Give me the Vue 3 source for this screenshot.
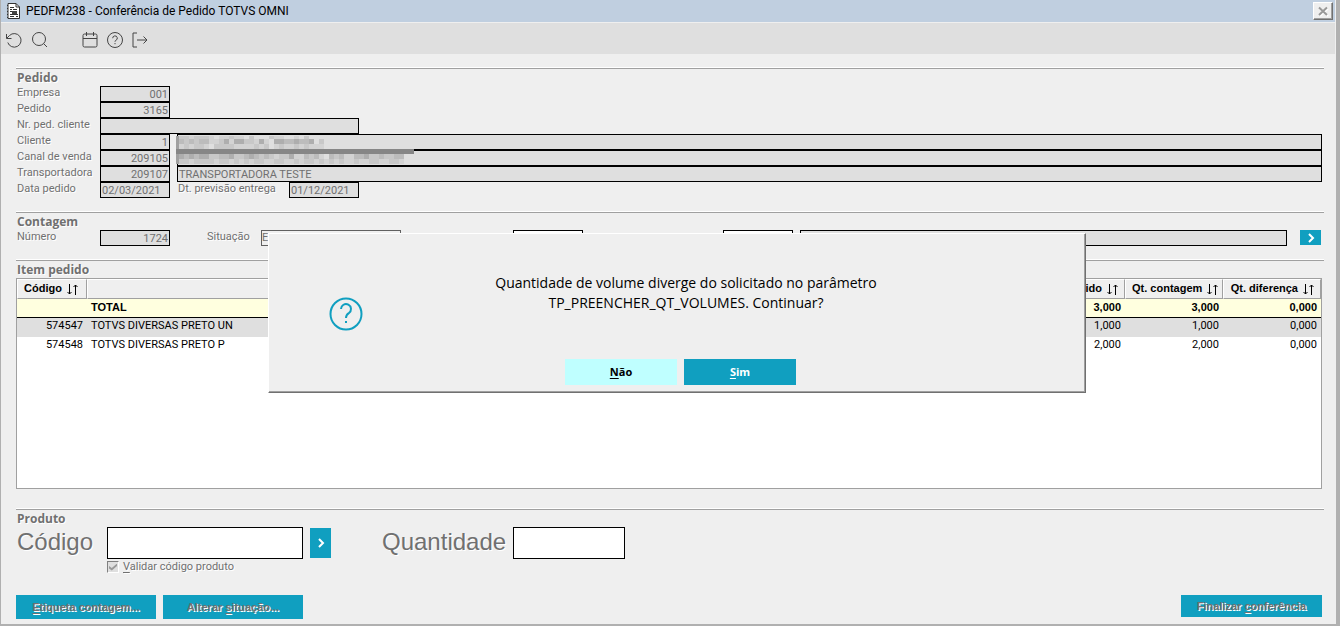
<script setup>
import { ref } from 'vue'

const codigo = ref('')
const quantidade = ref('')

const numericColumns = ['Qt. pedido', 'Qt. contagem', 'Qt. diferença']
const items = [
  { code: '574547', name: 'TOTVS DIVERSAS PRETO UN', values: ['1,000', '1,000', '0,000'], selected: true },
  { code: '574548', name: 'TOTVS DIVERSAS PRETO P', values: ['2,000', '2,000', '0,000'], selected: false }
]
const totals = ['3,000', '3,000', '0,000']

// Mosaic that hides the customer names: one digit per cell, higher is darker.
const shades = ['', '#d3d3d3', '#c8c8c8', '#bcbcbc', '#aeaeae']
const mosaicRows = [
  { y: 0, h: 3, cells: '22122210112110200021100102000' },
  { y: 3, h: 5, cells: '32323311241442214104433433402' },
  { y: 8, h: 5, cells: '12122102222111121201211212111' },
  { y: 18, h: 5, cells: '434344223342234323212241132310323113342232233' },
  { y: 23, h: 5, cells: '221222212212121221122112122121212112112211221' }
]
const mosaic = mosaicRows.flatMap((r) =>
  [...r.cells]
    .map((c, i) => ({ x: 3 + i * 5, y: r.y, h: r.h, fill: shades[+c] }))
    .filter((c) => c.fill)
)
</script>

<template>
  <div class="window">
    <header class="titlebar">
      <svg class="app-icon" width="14" height="16" viewBox="0 0 14 16" aria-hidden="true">
        <path d="M1 .5h8l3.500 3.500V15.500H1z" fill="#fff" stroke="#333" />
        <path d="M9 .5V4h3.500" fill="none" stroke="#333" />
        <path d="M3 4.500h4M3 6.500h2M6 6.500h4M3 8.500h2M3 11.500h8M3 13.500h4M9 13.500h2" stroke="#333" />
        <path d="M5 8h5v3H5z" fill="#444" />
        <path d="M0 2v1M0 5v1M0 8v1M0 11v1M0 14v1" stroke="#333" stroke-width="2" />
      </svg>
      <h1>PEDFM238 - Conferência de Pedido TOTVS OMNI</h1>
      <button class="close" type="button" aria-label="Fechar">
        <svg width="12" height="11" viewBox="0 0 12 11">
          <path d="M3 2.500l8 7.500M11 2.500l-8 7.500" stroke="#fff" stroke-width="2" />
          <path d="M2 1.500l8 7.500M10 1.500l-8 7.500" stroke="#999" stroke-width="2" />
        </svg>
      </button>
    </header>

    <nav class="toolbar">
      <button type="button" aria-label="Desfazer">
        <svg width="18" height="18" viewBox="0 0 18 18">
          <path d="M.5 3v4.500h5M.8 7.200L3.500 4.500A6.800 6.800 0 1 1 1.800 11.500" />
        </svg>
      </button>
      <button type="button" aria-label="Pesquisar">
        <svg width="18" height="18" viewBox="0 0 18 18">
          <circle cx="8" cy="8" r="6.500" /><path d="M12.700 12.700L16 16" />
        </svg>
      </button>
      <button class="spaced" type="button" aria-label="Calendário">
        <svg width="18" height="18" viewBox="0 0 18 18">
          <rect x="2" y="3" width="14" height="13" rx="1.500" /><path d="M2 7.500h14M5.500 1v4M12.500 1v4" />
        </svg>
      </button>
      <button type="button" aria-label="Ajuda">
        <svg width="18" height="18" viewBox="0 0 18 18">
          <circle cx="9" cy="9" r="7.500" />
          <path d="M6.700 7.200a2.300 2.300 0 1 1 3.200 2.100c-.6.300-.9.600-.9 1.400" /><path d="M9 12v1.200" />
        </svg>
      </button>
      <button type="button" aria-label="Sair">
        <svg width="18" height="18" viewBox="0 0 18 18">
          <path d="M6 2H2v14h4M6 9h10M12.500 5.500L16 9l-3.500 3.500" />
        </svg>
      </button>
    </nav>

    <main class="content">
      <section>
        <h2>Pedido</h2>
        <div class="fields">
          <label for="empresa">Empresa</label>
          <input id="empresa" class="num" value="001" readonly />
          <label for="pedido">Pedido</label>
          <input id="pedido" class="num" value="3165" readonly />
          <label for="nrped">Nr. ped. cliente</label>
          <input id="nrped" class="wide" value="" readonly />
          <label for="cliente">Cliente</label>
          <input id="cliente" class="num" value="1" readonly />
          <div class="name masked">
            <input aria-label="Nome do cliente" value="" readonly />
            <svg class="mosaic" width="238" height="28" viewBox="0 0 238 28" shape-rendering="crispEdges" aria-hidden="true">
              <rect width="3" height="28" fill="#a0a0a0" />
              <rect v-for="(c, i) in mosaic" :key="i" :x="c.x" :y="c.y" width="5" :height="c.h" :fill="c.fill" />
              <rect y="13" width="238" height="5" fill="#868686" />
            </svg>
          </div>
          <label for="canal">Canal de venda</label>
          <input id="canal" class="num" value="209105" readonly />
          <input class="name" aria-label="Nome do canal de venda" value="" readonly />
          <label for="transp">Transportadora</label>
          <input id="transp" class="num" value="209107" readonly />
          <input class="name" aria-label="Nome da transportadora" value="TRANSPORTADORA TESTE" readonly />
          <label for="data">Data pedido</label>
          <input id="data" value="02/03/2021" readonly />
          <div class="name delivery">
            <label for="previsao">Dt. previsão entrega</label>
            <input id="previsao" value="01/12/2021" readonly />
          </div>
        </div>
      </section>

      <section>
        <h2>Contagem</h2>
        <div class="count">
          <label class="first" for="numero">Número</label>
          <input id="numero" class="num short" value="1724" readonly />
          <label class="status" for="situacao">Situação</label>
          <select id="situacao" disabled><option>E</option></select>
          <input class="short editable volume" aria-label="Volume" />
          <input class="short editable user" aria-label="Conferente" />
          <input class="grow" aria-label="Nome do conferente" readonly />
          <button class="go" type="button" aria-label="Buscar conferente">
            <svg width="10" height="10" viewBox="0 0 10 10"><path d="M3 1l4 4-4 4" /></svg>
          </button>
        </div>
      </section>

      <section class="items">
        <h2>Item pedido</h2>
        <div class="table-box">
          <table>
            <colgroup>
              <col class="c-code" /><col /><col v-for="c in numericColumns" :key="c" class="c-num" />
            </colgroup>
            <thead>
              <tr>
                <th>Código<svg class="sort" width="11" height="11" viewBox="0 0 11 11"><path d="M2.500 0v10M.5 8l2 2 2-2M8.500 11V1M6.500 3l2-2 2 2" /></svg></th>
                <th></th>
                <th v-for="c in numericColumns" :key="c" class="right">{{ c }}<svg class="sort" width="11" height="11" viewBox="0 0 11 11"><path d="M2.500 0v10M.5 8l2 2 2-2M8.500 11V1M6.500 3l2-2 2 2" /></svg></th>
              </tr>
            </thead>
            <tbody>
              <tr class="total">
                <td></td>
                <td>TOTAL</td>
                <td v-for="(t, i) in totals" :key="i" class="right">{{ t }}</td>
              </tr>
              <tr v-for="item in items" :key="item.code" :class="{ selected: item.selected }">
                <td class="right">{{ item.code }}</td>
                <td>{{ item.name }}</td>
                <td v-for="(v, i) in item.values" :key="i" class="right">{{ v }}</td>
              </tr>
            </tbody>
          </table>
        </div>
      </section>

      <section class="product">
        <h2>Produto</h2>
        <div class="entry">
          <label class="code-label" for="codigo">Código</label>
          <input id="codigo" v-model="codigo" class="editable code" />
          <button class="go tall" type="button" aria-label="Buscar produto">
            <svg width="10" height="10" viewBox="0 0 10 10"><path d="M3 1l4 4-4 4" /></svg>
          </button>
          <label class="qty-label" for="quantidade">Quantidade</label>
          <input id="quantidade" v-model="quantidade" class="editable qty" />
        </div>
        <label class="check">
          <input type="checkbox" checked disabled />
          <span><u>V</u>alidar código produto</span>
        </label>
      </section>

      <footer class="actions">
        <button type="button" class="action" disabled><u>E</u>tiqueta contagem...</button>
        <button type="button" class="action" disabled>Alterar <u>s</u>ituação...</button>
        <button type="button" class="action finish" disabled>Finalizar <u>c</u>onferência</button>
      </footer>
    </main>

    <div class="dialog" role="dialog" aria-labelledby="dialog-text">
      <svg class="question" width="34" height="34" viewBox="0 0 34 34" aria-hidden="true">
        <circle cx="17" cy="17" r="15.500" />
        <path d="M12 12a5 5 0 1 1 7.800 4.200C18 17.300 17 18.200 17 21" />
        <path d="M17 24v2" />
      </svg>
      <p id="dialog-text">Quantidade de volume diverge do solicitado no parâmetro TP_PREENCHER_QT_VOLUMES. Continuar?</p>
      <div class="choices">
        <button type="button" class="choice no"><u>N</u>ão</button>
        <button type="button" class="choice yes"><u>S</u>im</button>
      </div>
    </div>
  </div>
</template>

<style>
body {
  margin: 0;
}
</style>

<style scoped>
* {
  box-sizing: border-box;
}

.window {
  position: relative;
  display: flex;
  flex-direction: column;
  min-height: 100vh;
  border: solid #b0b0b0;
  border-width: 0 4px 2px 1px;
  background: #efefef;
  color: #000;
  font: 11px/16px Roboto, "Liberation Sans", sans-serif;
}

button,
input,
select {
  margin: 0;
  padding: 0;
  border: 0;
  border-radius: 0;
  font: inherit;
}

u {
  text-decoration: underline;
  text-underline-offset: 2px;
}

.titlebar {
  display: flex;
  align-items: center;
  height: 22px;
  padding: 0 2px 0 6px;
  background: #c0cfe0;
  border-right: 1px solid #efefef;
}

.titlebar h1 {
  flex: 1;
  margin: 0 0 0 5px;
  font: 12px/20px Roboto, "Noto Sans", sans-serif;
}

.close {
  display: flex;
  align-items: center;
  justify-content: center;
  width: 20px;
  height: 18px;
  border: 1px solid;
  border-color: #fff #707070 #707070 #fff;
  box-shadow: inset -1px -1px #a0a0a0;
  background: #efefef;
}

.toolbar {
  display: flex;
  align-items: center;
  gap: 7px;
  height: 31px;
  margin: 1px 1px 0 0;
  padding: 3px 5px 0;
  background: #dfdfdf;
}

.toolbar button {
  width: 18px;
  height: 18px;
  background: none;
}

.toolbar svg {
  display: block;
  fill: none;
  stroke: #444;
}

.toolbar .spaced {
  margin-left: 25px;
}

.content {
  display: flex;
  flex: 1;
  flex-direction: column;
  padding: 0 12px 5px 15px;
}

section {
  margin-top: 14px;
}

h2 {
  height: 18px;
  margin: 0;
  padding-left: 1px;
  border-top: 1px solid #a0a0a0;
  box-shadow: 0 -1px #fff;
  color: #707070;
  font: bold 12px/18px "Open Sans", "Noto Sans", sans-serif;
  text-shadow: 1px 1px #fff;
}

label {
  padding-left: 1px;
  color: #707070;
  line-height: 14px;
  white-space: nowrap;
  text-shadow: 1px 1px #fff;
}

input {
  min-width: 0;
  height: 16px;
  padding: 0 1px;
  border: 1px solid #000;
  background: #dfdfdf;
  color: #707070;
  line-height: 14px;
}

.num {
  text-align: right;
}

.editable {
  background: #fff;
  color: #000;
}

.short {
  width: 70px;
}

.fields {
  display: grid;
  grid-template-columns: 84px 70px 1fr;
  grid-auto-rows: 16px;
  padding-right: 2px;
}

.fields > label {
  grid-column: 1;
}

.wide {
  grid-column: 2 / 4;
  width: 259px;
}

.name {
  margin-left: 7px;
}

.masked {
  position: relative;
  display: flex;
}

.masked input {
  flex: 1;
}

.mosaic {
  position: absolute;
  z-index: 1;
  top: 2px;
  left: -1px;
}

.delivery {
  display: flex;
}

.delivery label {
  width: 112px;
}

.delivery input {
  width: 70px;
}

.count {
  display: flex;
  padding-right: 3px;
}

.first {
  width: 84px;
}

.status {
  width: 55px;
  margin-left: 36px;
}

select {
  width: 140px;
  height: 16px;
  border: 1px solid #606060;
  background: #efefef;
  color: #707070;
  line-height: 14px;
  opacity: 1;
  appearance: none;
}

.volume {
  margin-left: 112px;
}

.user {
  margin: 0 7px 0 140px;
}

.grow {
  flex: 1;
}

.go {
  display: flex;
  align-items: center;
  justify-content: center;
  width: 21px;
  height: 15px;
  margin-left: 13px;
  background: #109fc0;
}

.go svg {
  fill: none;
  stroke: #fff;
  stroke-width: 2;
}

.items {
  display: flex;
  flex: 1;
  flex-direction: column;
}

.table-box {
  flex: 1;
  margin-right: 2px;
  border: 1px solid #a0a0a0;
  background: #fff;
}

table {
  width: 100%;
  table-layout: fixed;
  border-collapse: separate;
  border-spacing: 0;
  line-height: 16px;
}

.c-code {
  width: 70px;
}

.c-num {
  width: 98px;
}

th {
  height: 20px;
  padding: 0 6px;
  border: 1px solid;
  border-color: #fff #a0a0a0 #a0a0a0 #fff;
  background: #efefef;
  font-family: "Liberation Sans", Arial, sans-serif;
  text-align: left;
  vertical-align: top;
  white-space: nowrap;
}

td {
  height: 19px;
  padding: 0 4px;
  vertical-align: top;
  white-space: nowrap;
}

.right {
  text-align: right;
}

.sort {
  margin-left: 5px;
  vertical-align: -3px;
  fill: none;
  stroke: #000;
}

.total td {
  border-bottom: 1px solid #000;
  background: #ffffdf;
  font-family: "Liberation Sans", Arial, sans-serif;
  font-weight: bold;
}

.selected td {
  background: #dfdfdf;
}

.product {
  margin-top: 20px;
}

.entry {
  display: flex;
}

.entry label {
  font: 24px/30px "Liberation Sans", Arial, sans-serif;
}

.entry input {
  height: 32px;
}

.code-label {
  width: 91px;
}

.code {
  width: 196px;
  font-size: 24px;
}

.qty {
  width: 112px;
  font-size: 24px;
}

.go.tall {
  height: 30px;
  margin: 1px 50px 0 7px;
}

.qty-label {
  width: 132px;
}

.check {
  display: flex;
  align-items: center;
  gap: 4px;
  height: 16px;
  margin-left: 91px;
  padding: 0;
}

.check input {
  display: grid;
  place-items: center;
  width: 12px;
  height: 12px;
  padding: 0;
  border: 1px solid;
  border-color: #808080 #fff #fff #808080;
  background: #dfdfdf;
  appearance: none;
}

.check input::before {
  content: "";
  width: 8px;
  height: 7px;
  background: #999;
  clip-path: polygon(0 35%, 35% 65%, 100% 0, 100% 35%, 35% 100%, 0 70%);
}

.actions {
  display: flex;
  align-items: flex-start;
  gap: 7px;
  margin-top: 20px;
}

.action {
  width: 140px;
  height: 24px;
  background: #109fc0;
  color: #707070;
  font: bold 11px/22px "Liberation Sans", Arial, sans-serif;
  text-shadow: 1px 1px #fff;
}

.finish {
  width: 141px;
  height: 22px;
  margin: 0 2px 0 auto;
}

.dialog {
  position: absolute;
  z-index: 2;
  top: 233px;
  left: 20%;
  display: grid;
  grid-template-columns: 34px 1fr;
  align-items: center;
  width: 818px;
  max-width: 80%;
  padding: 39px 60px 7px;
  border: 1px solid;
  border-color: #fff #707070 #707070 #fff;
  box-shadow: inset -1px -1px #a0a0a0;
  background: #efefef;
}

.question {
  margin-top: 21px;
  fill: none;
  stroke: #109fc0;
  stroke-width: 2;
}

.dialog p {
  width: 410px;
  height: 60px;
  margin: 0 0 0 118px;
  font: 14px/20px "Open Sans", "Noto Sans", sans-serif;
  text-align: center;
}

.choices {
  grid-column: 1 / 3;
  display: flex;
  gap: 7px;
  margin: 26px 0 0 236px;
}

.choice {
  width: 112px;
  height: 26px;
  font: bold 11px/26px "Open Sans", "Noto Sans", sans-serif;
}

.no {
  background: #bfffff;
  color: #000;
}

.yes {
  background: #109fc0;
  color: #fff;
}
</style>
